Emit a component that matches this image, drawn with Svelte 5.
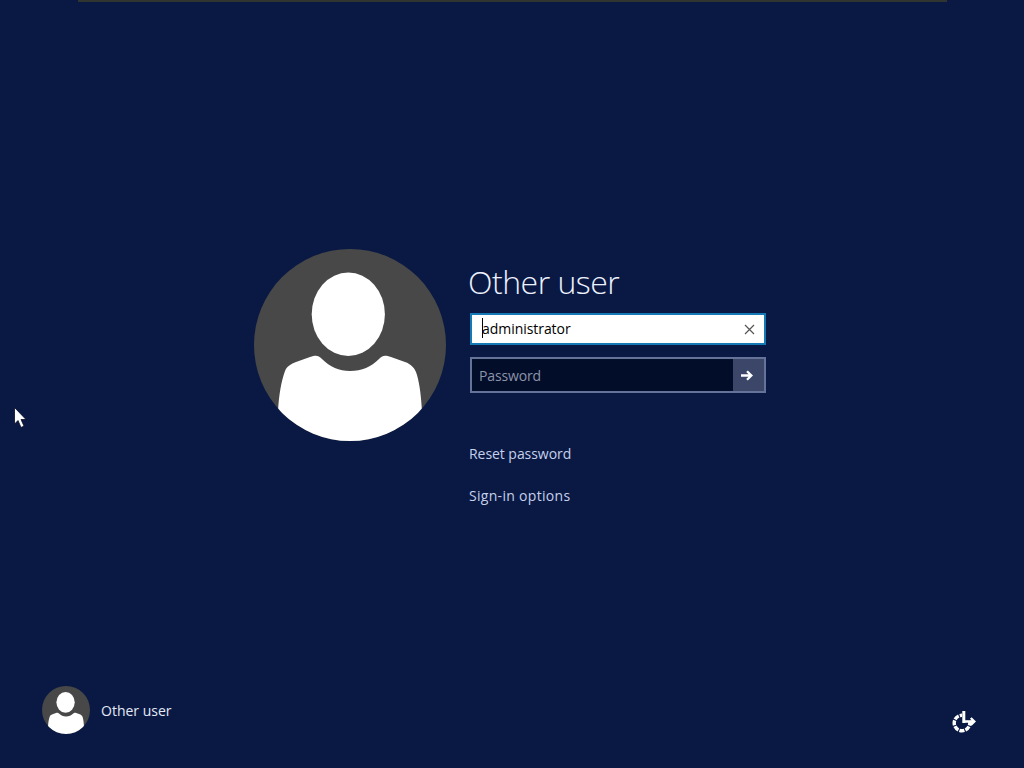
<script>
  let username = $state('administrator');
  let password = $state('');
</script>

{#snippet avatar(size)}
  <svg class="avatar" width={size} height={size} viewBox="0 0 192 192" aria-hidden="true">
    <defs>
      <clipPath id="disc-{size}"><circle cx="96" cy="96" r="96" /></clipPath>
    </defs>
    <g clip-path="url(#disc-{size})">
      <rect width="192" height="192" fill="#484848" />
      <ellipse cx="94.3" cy="65.3" rx="36.6" ry="41.7" fill="#fff" />
      <path
        d="M24 162C25 146 27 133 31 122C33 117 37 115 42 113L56 108C62 106 64 106 68 110C76 118 85 122 96 122C108 122 117 118 125 110C129 106 131 106 137 108L151 113C157 115 161 119 163 126C166 137 167 147 168 162V192H24Z"
        fill="#fff"
      />
    </g>
  </svg>
{/snippet}

<div class="screen">
  <div class="top-edge"></div>

  <main>
    {@render avatar(192)}
    <form class="sign-in" onsubmit={(e) => e.preventDefault()}>
      <h1>Other user</h1>

      <div class="field user">
        <span class="caret"></span>
        <input class="name" bind:value={username} aria-label="User name" />
        <button type="button" class="clear" aria-label="Clear" onclick={() => (username = '')}>
          <svg width="11" height="11" viewBox="0 0 11 11">
            <path d="M1 1L10 10M10 1L1 10" stroke="#555" stroke-width="1.2" />
          </svg>
        </button>
      </div>

      <div class="field pass">
        <input type="password" placeholder="Password" bind:value={password} />
        <button class="submit" aria-label="Submit">
          <svg width="12" height="11" viewBox="0 0 12 11" fill="none" stroke="#fff" stroke-width="2.3">
            <path d="M0 5.5H10.5M6 1.2L10.4 5.5L6 9.8" />
          </svg>
        </button>
      </div>

      <button type="button" class="link reset">Reset password</button>
      <button type="button" class="link options">Sign-in options</button>
    </form>
  </main>

  <footer>
    <div class="account">
      {@render avatar(48)}
      <span>Other user</span>
    </div>
    <button class="ease" aria-label="Ease of access">
      <svg width="25" height="24" viewBox="0 0 25 24" fill="none" stroke="#fff">
        <circle cx="10" cy="13" r="7.8" stroke-width="3.4" stroke-dasharray="5 1.13" stroke-dashoffset="2.5" />
        <path d="M10 1H21V10H10Z" fill="#091943" stroke="none" />
        <path d="M11.8 1V13" stroke-width="3" />
        <path d="M11 11.5H22M18.8 8L22.3 11.5L18.8 15" stroke-width="2.4" />
      </svg>
    </button>
  </footer>

  <svg class="cursor" width="13" height="21" viewBox="0 0 13 21" aria-hidden="true">
    <path d="M0.5 0.5V17L4 13.5L7 20.5L10 19L7 12.5H12Z" fill="#fff" stroke="#050d25" stroke-width="0.8" />
  </svg>
</div>

<style>
  :global(body) {
    background: #091943;
    overflow: hidden;
  }

  .screen {
    position: relative;
    display: flex;
    flex-direction: column;
    box-sizing: border-box;
    width: 1024px;
    height: 768px;
    padding-bottom: 34px;
    background: #091943;
    color: #e4e9f8;
    font-family: 'Open Sans', 'Noto Sans', sans-serif;
    font-size: 14px;
  }

  .top-edge {
    width: 869px;
    height: 2px;
    margin-left: 78px;
    background: #30352f;
  }

  svg {
    display: block;
    flex: none;
  }

  button {
    padding: 0;
    border: 0;
    background: none;
    color: inherit;
    font: inherit;
  }

  main {
    display: flex;
    flex: 1;
    align-items: flex-start;
    gap: 23px;
    padding: 247px 0 0 254px;
  }

  .sign-in {
    display: flex;
    flex-direction: column;
    align-items: flex-start;
    width: 297px;
    padding-top: 9px;
  }

  h1 {
    height: 48px;
    margin: 0 0 7px -1px;
    color: #eef2ff;
    font-size: 32px;
    font-weight: 300;
    line-height: 48px;
    letter-spacing: -0.5px;
    white-space: nowrap;
  }

  .field {
    display: flex;
    align-items: center;
    box-sizing: border-box;
    width: 296px;
    margin-left: 1px;
  }

  .field input {
    flex: 1;
    min-width: 0;
    padding: 0;
    border: 0;
    outline: 0;
    background: none;
    font: inherit;
  }

  .user {
    height: 32px;
    padding: 0 9px;
    border: 2px solid #1479b4;
    background: #fff;
    color: #222;
  }

  .user .name {
    padding-bottom: 2px;
    letter-spacing: -0.05px;
  }

  .caret {
    width: 1px;
    height: 20px;
    margin-right: -1px;
    margin-bottom: 2px;
    margin-left: 1px;
    background: #000;
  }

  .pass {
    height: 36px;
    margin-top: 12px;
    padding-left: 7px;
    border: 2px solid #65729a;
    background: #020d2a;
    color: #fff;
  }

  .pass input {
    letter-spacing: -0.15px;
  }

  .pass input::placeholder {
    color: #8d94a9;
    opacity: 1;
  }

  .submit {
    display: flex;
    align-items: center;
    align-self: stretch;
    width: 31px;
    padding-left: 8px;
    background: #3b4668;
  }

  .link {
    height: 20px;
    color: #c6d0ec;
    line-height: 20px;
    white-space: nowrap;
  }

  .reset {
    margin-top: 51px;
    letter-spacing: -0.05px;
  }

  .options {
    margin-top: 22px;
    letter-spacing: 0.3px;
  }

  footer {
    display: flex;
    align-items: flex-end;
    justify-content: space-between;
    padding: 0 47px 0 42px;
  }

  .account {
    display: flex;
    align-items: center;
    gap: 11px;
  }

  .cursor {
    position: absolute;
    top: 407px;
    left: 14px;
  }
</style>
